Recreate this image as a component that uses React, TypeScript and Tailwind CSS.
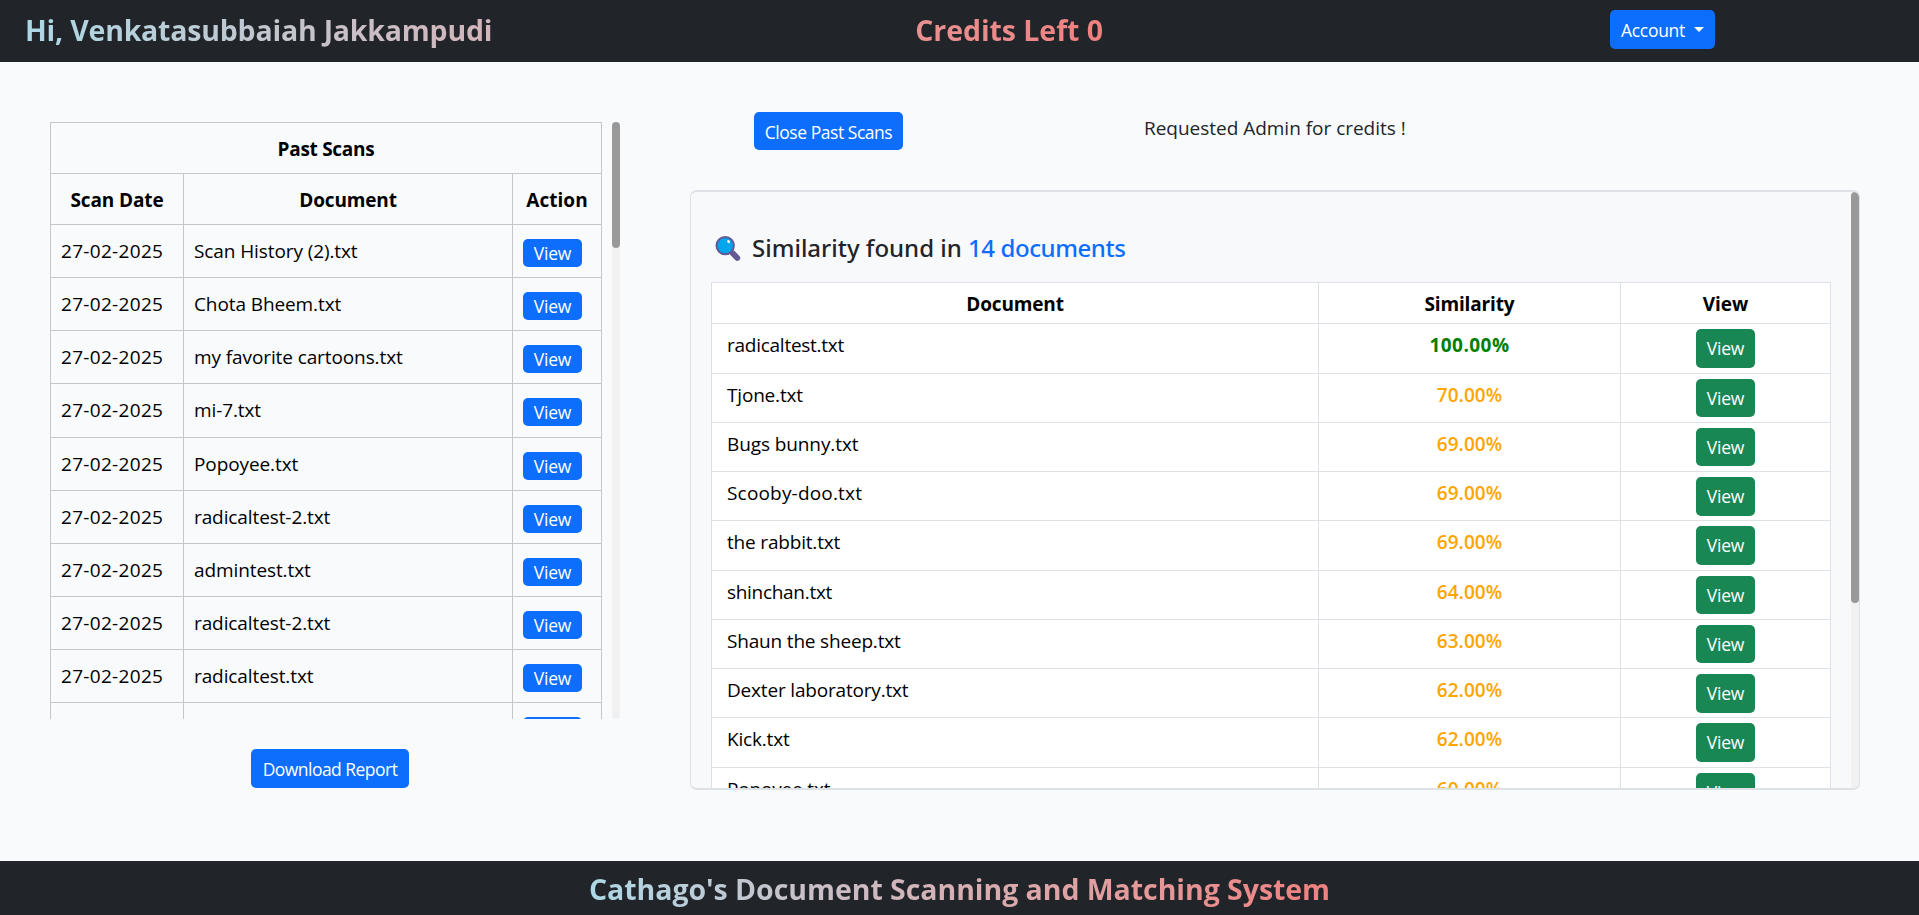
type Scan = { date: string; name: string };
type Match = { name: string; score: string; tracking?: string };

const scans: Scan[] = [
  "Scan History (2).txt",
  "Chota Bheem.txt",
  "my favorite cartoons.txt",
  "mi-7.txt",
  "Popoyee.txt",
  "radicaltest-2.txt",
  "admintest.txt",
  "radicaltest-2.txt",
  "radicaltest.txt",
  "Tjone.txt",
].map((name) => ({ date: "27-02-2025", name }));

const matches: Match[] = [
  { name: "radicaltest.txt", score: "100.00%", tracking: "tracking-[-0.26px]" },
  { name: "Tjone.txt", score: "70.00%" },
  { name: "Bugs bunny.txt", score: "69.00%", tracking: "tracking-[-0.1px]" },
  { name: "Scooby-doo.txt", score: "69.00%", tracking: "tracking-[0.18px]" },
  { name: "the rabbit.txt", score: "69.00%" },
  { name: "shinchan.txt", score: "64.00%", tracking: "tracking-[-0.3px]" },
  { name: "Shaun the sheep.txt", score: "63.00%" },
  { name: "Dexter laboratory.txt", score: "62.00%" },
  { name: "Kick.txt", score: "62.00%" },
  { name: "Popoyee.txt", score: "60.00%" },
];

function Magnifier() {
  return (
    <svg className="mt-[1.5px] h-[27px] w-[26px] shrink-0" viewBox="0 0 26 27" fill="none">
      <path d="M17.5 18 L22.3 23" stroke="#635994" strokeWidth="5.8" strokeLinecap="round" />
      <circle cx="10.2" cy="10.6" r="8.7" fill="#00a6ed" stroke="#635994" strokeWidth="2" />
      <ellipse cx="13.6" cy="6.6" rx="1.3" ry="1.7" fill="#f4f4f4" transform="rotate(-25 13.6 6.6)" />
    </svg>
  );
}

function PastScans() {
  return (
    <div className="flex h-[597px] w-[570px] justify-between overflow-hidden">
      <div className="w-[552px] shrink-0 text-black">
        <div className="h-[51px] border border-b-0 border-[#c6c7c8] pt-[11px] text-center font-bold tracking-[-0.28px]">
          Past Scans
        </div>
        <div className="grid h-[51.2px] grid-cols-[133px_329px_90px] border-t border-[#c6c7c8] text-center font-bold *:border-l *:border-[#c6c7c8] *:pt-[11px]">
          <div className="tracking-[-0.1px]">Scan Date</div>
          <div className="tracking-[-0.15px]">Document</div>
          <div className="border-r tracking-[0.05px]">Action</div>
        </div>
        {scans.map((s, i) => (
          <div
            key={i}
            className="grid h-[53.1px] grid-cols-[133px_329px_90px] border-t border-[#c6c7c8] *:border-l *:border-[#c6c7c8]"
          >
            <div className="pt-[11px] pl-[10px] tracking-[0.31px]">{s.date}</div>
            <div className="pt-[11px] pl-[10px] tracking-[-0.1px]">{s.name}</div>
            <div className="border-r pt-[14px] pl-[10px]">
              <button className="block h-[28px] w-[59px] rounded-[5px] bg-[#0d6efd] text-[17.5px] leading-[29px] tracking-[-0.2px] text-white">
                View
              </button>
            </div>
          </div>
        ))}
      </div>
      <div className="h-full w-2 rounded-full bg-[#f1f1f1]">
        <div className="h-[126px] rounded-full bg-[#999999]" />
      </div>
    </div>
  );
}

function Results() {
  return (
    <div className="flex h-[600px] w-[1170px] justify-between overflow-hidden rounded-[7px] border-x border-y-2 border-[#dee2e6] bg-[#f8f9fa]">
      <div className="w-[1140px] shrink-0 pl-[20px]">
        <h4 className="flex h-[90px] items-start pt-[41px] pl-[4px] font-['Noto_Sans',sans-serif] text-[24px] leading-[30px] font-medium text-[#212529]">
          <Magnifier />
          <span className="pl-[11px] whitespace-pre">
            Similarity found in <span className="tracking-[-0.42px] text-[#0d6efd]">14 documents</span>
          </span>
        </h4>
        <div className="w-[1120px] bg-white text-black">
          <div className="grid h-[41.4px] grid-cols-[607px_302px_211px] border-t border-[#dee2e6] text-center font-bold *:border-l *:border-[#dee2e6] *:pt-[6px]">
            <div className="tracking-[-0.15px]">Document</div>
            <div className="tracking-[-0.15px]">Similarity</div>
            <div className="border-r">View</div>
          </div>
          {matches.map((m) => (
            <div
              key={m.name}
              className="grid h-[49.25px] grid-cols-[607px_302px_211px] border-t border-[#dee2e6] *:border-l *:border-[#dee2e6]"
            >
              <div className={`pt-[6px] pl-[15px] ${m.tracking ?? "tracking-[-0.18px]"}`}>{m.name}</div>
              <div
                className={
                  m.score === "100.00%"
                    ? "pt-[6px] text-center font-bold tracking-[0.45px] text-[#008000]"
                    : "pt-[6px] text-center font-semibold tracking-[0.07px] text-[#ffa500]"
                }
              >
                {m.score}
              </div>
              <div className="border-r pt-[5px]">
                <button className="mx-auto block h-[38.4px] w-[59px] rounded-[5px] bg-[#198754] text-[17.5px] leading-[39px] tracking-[-0.2px] text-white">
                  View
                </button>
              </div>
            </div>
          ))}
        </div>
      </div>
      <div className="h-full w-2 rounded-full bg-[#f1f1f1]">
        <div className="h-[411px] rounded-full bg-[#999999]" />
      </div>
    </div>
  );
}

export default function App() {
  return (
    <div className="flex h-[915px] flex-col overflow-hidden bg-[#f8fafc] font-['Open_Sans',sans-serif] text-[19px] leading-[30px] text-[#212529]">
      <header className="flex h-[62px] items-start bg-[#212529] pl-[25px]">
        <div className="flex w-[1078px] justify-between bg-linear-to-r from-[#add8e6] to-[#f08080] bg-clip-text pt-[12px] pb-[10px] text-[28.5px] leading-[36px] font-bold text-transparent">
          <span className="tracking-[-0.21px]">Hi, Venkatasubbaiah Jakkampudi</span>
          <span className="tracking-[-0.06px]">Credits Left 0</span>
        </div>
        <button className="mt-[10px] ml-[507px] flex h-[39px] w-[105px] items-center rounded-[5px] bg-[#0d6efd] pl-[11px] text-[17.5px] tracking-[-0.3px] text-white">
          Account
          <span className="ml-[9px] border-x-[5px] border-t-[5px] border-x-transparent border-t-white" />
        </button>
      </header>

      <main className="flex flex-1 items-start">
        <section className="flex flex-col items-center pt-[60px] pl-[50px]">
          <PastScans />
          <button className="mt-[30px] mr-[10px] h-[39px] w-[158px] rounded-[5px] bg-[#0d6efd] text-[17.5px] tracking-[-0.53px] text-white">
            Download Report
          </button>
        </section>
        <section className="ml-[70px] pt-[50px]">
          <div className="flex h-[78px] items-start pl-[64px]">
            <button className="h-[38px] w-[149px] rounded-[5px] bg-[#0d6efd] pt-px text-[17.5px] tracking-[-0.46px] text-white">
              Close Past Scans
            </button>
            <p className="mt-px ml-[241px] tracking-[-0.02px]">Requested Admin for credits !</p>
          </div>
          <Results />
        </section>
      </main>

      <footer className="flex h-[54px] justify-center bg-[#212529]">
        <h4 className="bg-linear-to-r from-[#add8e6] to-[#f08080] bg-clip-text pt-[10px] text-[28.5px] leading-[36px] font-bold tracking-[-0.05px] text-transparent">
          Cathago's Document Scanning and Matching System
        </h4>
      </footer>
    </div>
  );
}
